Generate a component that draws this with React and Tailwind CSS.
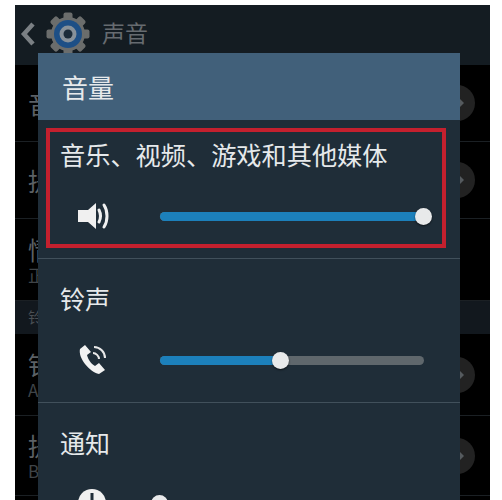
const CJK = "font-['Noto_Sans_CJK_SC','Liberation_Sans',sans-serif]";

function Gear() {
  const teeth = [0, 45, 90, 135, 180, 225, 270, 315];
  return (
    <svg width="44" height="44" viewBox="0 0 44 44">
      {teeth.map((a) => (
        <rect key={a} x="17.5" y="0.5" width="9" height="10" rx="2" fill="#6b6d6c" transform={`rotate(${a} 22 22)`} />
      ))}
      <circle cx="22" cy="22" r="17" fill="#6b6d6c" />
      <circle cx="22" cy="22" r="14" fill="#1d4f86" />
      <circle cx="22" cy="22" r="8.5" fill="#87919a" />
      <circle cx="22" cy="22" r="4.5" fill="#1c2c3a" />
    </svg>
  );
}

function Speaker() {
  return (
    <svg width="34" height="28" viewBox="0 0 34 28">
      <path d="M0 8h10l8-7v26l-8-7H0z" fill="#f0f0f0" />
      <path d="M21 8c2 4 2 8 0 12" fill="none" stroke="#f0f0f0" strokeWidth="3" strokeLinecap="round" />
      <path d="M26 3c4 6 4 16 0 22" fill="none" stroke="#f0f0f0" strokeWidth="3" strokeLinecap="round" />
    </svg>
  );
}

function Ring() {
  return (
    <svg width="30" height="30" viewBox="0 0 30 30">
      <path d="M7 0 2 4C1 8 3 14 7 19c4 5 9 9 14 10l6-4-6-7-4 3c-4-2-7-7-8-11l4-3z" fill="#f2f2f2" />
      <path d="M15 8c3 0 6 3 6 6" fill="none" stroke="#e8e8e8" strokeWidth="2" />
      <path d="M16 2c6 0 11 5 11 11" fill="none" stroke="#e8e8e8" strokeWidth="2" />
    </svg>
  );
}

function Alert() {
  return (
    <svg width="28" height="28" viewBox="0 0 28 28">
      <circle cx="14" cy="14" r="14" fill="#f0f0f0" />
      <rect x="12.5" y="4" width="3" height="13" fill="#1f2d38" />
    </svg>
  );
}

function Slider({ fill, icon, track = true }) {
  return (
    <div className="flex items-center">
      <div className="w-[100px] pl-[18px] flex justify-start items-center">{icon}</div>
      <div className={`relative w-[264px] h-[9px] rounded-full ${track ? "bg-[#5f676c]" : ""}`}>
        <div className="h-full rounded-full bg-[#1c80bb]" style={{ width: `${fill}%` }} />
        <div
          className="absolute top-1/2 w-[17px] h-[17px] -ml-[9px] -mt-[8px] rounded-full bg-[#e8e9ea] shadow-[0_1px_2px_rgba(0,0,0,0.6)]"
          style={{ left: `${fill}%` }}
        />
      </div>
    </div>
  );
}

function Row({ h, main, sub, circle }) {
  return (
    <div className={`relative ${h} border-b border-[#1b2024] pl-[13px] flex flex-col justify-center`}>
      <div className="text-[25px] leading-[30px] text-[#5c6166]">{main}</div>
      {sub && <div className="text-[17px] leading-[22px] text-[#3f4448]">{sub}</div>}
      {circle && (
        <div className="absolute right-[15px] top-1/2 -translate-y-1/2 w-[36px] h-[36px] rounded-full bg-[#222222] flex items-center justify-end pr-[11px]">
          <div className="w-0 h-0 border-y-[5px] border-y-transparent border-l-[5px] border-l-[#555a5e]" />
        </div>
      )}
    </div>
  );
}

export default function App() {
  return (
    <div className={`h-[500px] overflow-hidden bg-white pt-[5px] pl-[15px] pr-[12px] ${CJK}`}>
      <div className="relative h-[495px] overflow-hidden bg-black">
        <header className="h-[60px] bg-[#141c22] flex items-center pl-[5px]">
          <svg width="16" height="24" viewBox="0 0 16 24" className="mt-[-2px]">
            <path d="M13 2 4 12l9 10" fill="none" stroke="#7b8084" strokeWidth="4.5" />
          </svg>
          <div className="ml-[10px] mt-[-2px]"><Gear /></div>
          <span className="ml-[12px] mt-[-6px] text-[23px] text-[#666b70]">声音</span>
        </header>
        <Row h="h-[77px]" main="音" circle />
        <Row h="h-[77px]" main="提" circle />
        <Row h="h-[82px]" main="情" sub="正" />
        <div className="h-[33px] bg-[#12181e] pl-[13px] flex items-center text-[15px] text-[#4a4f54]">铃</div>
        <Row h="h-[82px]" main="铃" sub="A" circle />
        <Row h="h-[80px]" main="提" sub="B" circle />

        <div className="absolute left-[23px] top-[48px] w-[422px] h-[460px] rounded-t-[2px] bg-[#1f2d38] text-[#e6e9eb]">
          <div className="h-[67px] bg-[#41607a] pl-[24px] flex items-center text-[26px]">音量</div>
          <div className="px-[8px] pt-[8px] h-[139px] border-b border-[#41505b]">
            <div className="h-[120px] w-[400px] border-[4px] border-[#c4202e] pl-[10px]">
              <div className="text-[25.2px] leading-[44px] whitespace-nowrap">音乐、视频、游戏和其他媒体</div>
              <div className="mt-[26px]"><Slider fill={100} icon={<Speaker />} /></div>
            </div>
          </div>
          <div className="h-[144px] border-b border-[#41505b] pl-[22px] pt-[21px]">
            <div className="text-[25px] leading-[36px]">铃声</div>
            <div className="mt-[29px]"><Slider fill={46} icon={<Ring />} /></div>
          </div>
          <div className="pl-[22px] pt-[21px]">
            <div className="text-[25px] leading-[36px]">通知</div>
            <div className="mt-[29px]"><Slider fill={0} icon={<Alert />} track={false} /></div>
          </div>
        </div>
      </div>
    </div>
  );
}
